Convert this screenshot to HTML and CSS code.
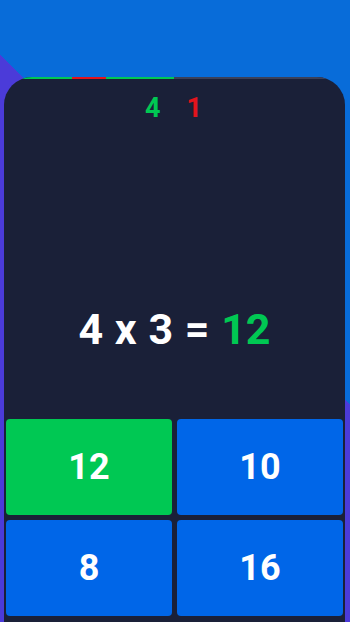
FILE: index.html
```html
<!DOCTYPE html>
<html lang="en">
<head>
<meta charset="utf-8">
<title>Multiplication Quiz</title>
<link rel="stylesheet" href="styles.css">
</head>
<body>
<div class="screen">
  <div class="card">
    <div class="progress">
      <span class="seg ok"></span>
      <span class="seg ok"></span>
      <span class="seg bad"></span>
      <span class="seg ok"></span>
      <span class="seg ok"></span>
      <span class="seg"></span>
      <span class="seg"></span>
      <span class="seg"></span>
      <span class="seg"></span>
      <span class="seg"></span>
    </div>
    <div class="score">
      <span class="score-ok">4</span>
      <span class="score-bad">1</span>
    </div>
    <div class="equation">4 x 3 = <span class="result">12</span></div>
    <div class="answers">
      <button class="answer correct">12</button>
      <button class="answer">10</button>
      <button class="answer">8</button>
      <button class="answer">16</button>
    </div>
  </div>
</div>
</body>
</html>
```
FILE: styles.css
```css
html, body {
  margin: 0;
  padding: 0;
}
body {
  width: 350px;
  height: 622px;
  overflow: hidden;
  background: linear-gradient(45deg, #4b3bd9 401px, #086cd9 401px);
  font-family: Roboto, "Liberation Sans", sans-serif;
}
.screen {
  padding: 77px 5px 0 4px;
  height: 622px;
  box-sizing: border-box;
}
.card {
  background: #1a2038;
  border-radius: 28px 28px 0 0;
  overflow: hidden;
  height: 545px;
}
.progress {
  display: flex;
  height: 2px;
}
.seg {
  flex: 1;
  background: #3b4058;
}
.seg.ok { background: #00c853; }
.seg.bad { background: #e3141c; }
.score {
  margin-top: 14px;
  height: 30px;
  line-height: 30px;
  display: flex;
  justify-content: center;
  gap: 26px;
  font-size: 27px;
  font-weight: 700;
  padding-right: 2px;
}
.score-ok { color: #00c853; }
.score-bad { color: #e3141c; }
.equation {
  margin-top: 181px;
  height: 50px;
  line-height: 50px;
  text-align: center;
  font-size: 43px;
  font-weight: 700;
  word-spacing: 1px;
  color: #ffffff;
}
.result { color: #00c853; }
.answers {
  margin-top: 65px;
  padding: 0 2px;
  display: grid;
  grid-template-columns: 1fr 1fr;
  grid-auto-rows: 96px;
  gap: 5px;
}
.answer {
  border: 0;
  border-radius: 4px;
  background: #0066e8;
  color: #ffffff;
  font-family: Roboto, "Liberation Sans", sans-serif;
  font-size: 36px;
  font-weight: 700;
  display: flex;
  align-items: center;
  justify-content: center;
  padding: 0;
}
.answer.correct { background: #00c853; }
```
